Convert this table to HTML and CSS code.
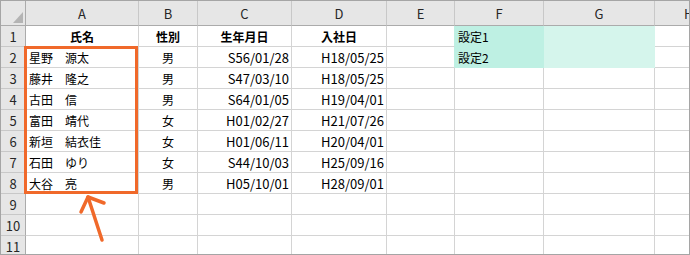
FILE: index.html
```html
<!DOCTYPE html>
<html lang="ja">
<head>
<meta charset="utf-8">
<link rel="stylesheet" href="styles.css">
</head>
<body>
<div class="sheet">
  <div class="grid">
    <div class="corner"><svg class="tri" width="24" height="24" viewBox="0 0 24 24"><polygon points="12,22 22,22 22,11" fill="#b4b4b4"/></svg></div>
    <div class="hc">A</div><div class="hc">B</div><div class="hc">C</div><div class="hc">D</div><div class="hc">E</div><div class="hc">F</div><div class="hc">G</div><div class="hc last">H</div>

    <div class="rh">1</div>
    <div class="c ctr cj b">氏名</div><div class="c ctr cj b">性別</div><div class="c ctr cj b">生年月日</div><div class="c ctr cj b">入社日</div><div class="c e-adj"></div><div class="c l cj f1">設定1</div><div class="c f2"></div><div class="c last"></div>

    <div class="rh">2</div>
    <div class="c l cj">星野　源太</div><div class="c ctr cj">男</div><div class="c r">S56/01/28</div><div class="c r">H18/05/25</div><div class="c e-adj"></div><div class="c l cj f1">設定2</div><div class="c f2"></div><div class="c last"></div>

    <div class="rh">3</div>
    <div class="c l cj">藤井　隆之</div><div class="c ctr cj">男</div><div class="c r">S47/03/10</div><div class="c r">H18/05/25</div><div class="c"></div><div class="c"></div><div class="c"></div><div class="c last"></div>

    <div class="rh">4</div>
    <div class="c l cj">古田　信</div><div class="c ctr cj">男</div><div class="c r">S64/01/05</div><div class="c r">H19/04/01</div><div class="c"></div><div class="c"></div><div class="c"></div><div class="c last"></div>

    <div class="rh">5</div>
    <div class="c l cj">富田　靖代</div><div class="c ctr cj">女</div><div class="c r">H01/02/27</div><div class="c r">H21/07/26</div><div class="c"></div><div class="c"></div><div class="c"></div><div class="c last"></div>

    <div class="rh">6</div>
    <div class="c l cj">新垣　結衣佳</div><div class="c ctr cj">女</div><div class="c r">H01/06/11</div><div class="c r">H20/04/01</div><div class="c"></div><div class="c"></div><div class="c"></div><div class="c last"></div>

    <div class="rh">7</div>
    <div class="c l cj">石田　ゆり</div><div class="c ctr cj">女</div><div class="c r">S44/10/03</div><div class="c r">H25/09/16</div><div class="c"></div><div class="c"></div><div class="c"></div><div class="c last"></div>

    <div class="rh">8</div>
    <div class="c l cj">大谷　亮</div><div class="c ctr cj">男</div><div class="c r">H05/10/01</div><div class="c r">H28/09/01</div><div class="c"></div><div class="c"></div><div class="c"></div><div class="c last"></div>

    <div class="rh">9</div>
    <div class="c"></div><div class="c"></div><div class="c"></div><div class="c"></div><div class="c"></div><div class="c"></div><div class="c"></div><div class="c last"></div>

    <div class="rh">10</div>
    <div class="c"></div><div class="c"></div><div class="c"></div><div class="c"></div><div class="c"></div><div class="c"></div><div class="c"></div><div class="c last"></div>

    <div class="rh">11</div>
    <div class="c"></div><div class="c"></div><div class="c"></div><div class="c"></div><div class="c"></div><div class="c"></div><div class="c"></div><div class="c last"></div>
  </div>
  <svg class="overlay" width="690" height="255" viewBox="0 0 690 255">
    <rect x="25.5" y="47.5" width="111" height="145" fill="none" stroke="#f0692a" stroke-width="3"/>
    <line x1="102" y1="240" x2="88" y2="197" stroke="#f0692a" stroke-width="3.5" stroke-linecap="round"/>
    <polyline points="81,212 88,197 104,203" fill="none" stroke="#f0692a" stroke-width="3.5" stroke-linecap="round" stroke-linejoin="round"/>
  </svg>
</div>
</body>
</html>
```

FILE: styles.css
```css
html, body {
  margin: 0;
  padding: 0;
  background: #ffffff;
}

body {
  font-family: "Noto Sans CJK JP", "Noto Sans", sans-serif;
  color: #000;
}

.sheet {
  position: relative;
  width: 690px;
  height: 255px;
  box-sizing: border-box;
  border: 1px solid #a5a5a5;
  overflow: hidden;
}

.grid {
  display: grid;
  grid-template-columns: 25px 113px 59px 94px 95px 68px 89px 111px 68px;
  grid-template-rows: 25px;
  grid-auto-rows: 21px;
}

.grid > div {
  box-sizing: border-box;
  display: flex;
  align-items: center;
  white-space: nowrap;
  overflow: hidden;
}

.corner {
  background: #e6e6e6;
  border-right: 1px solid #ababab;
  border-bottom: 1px solid #ababab;
}

.tri {
  display: block;
}

.hc {
  background: #e6e6e6;
  border-right: 1px solid #c8c8c8;
  border-bottom: 1px solid #ababab;
  justify-content: center;
  font-size: 13px;
  color: #262626;
  padding-top: 1px;
}

.rh {
  background: #e6e6e6;
  border-right: 1px solid #ababab;
  border-bottom: 1px solid #c8c8c8;
  justify-content: center;
  font-size: 13px;
  color: #262626;
}

.c {
  border-right: 1px solid #d4d4d4;
  border-bottom: 1px solid #d4d4d4;
  font-size: 13px;
}

.last {
  border-right: none;
}

.hc.last {
  justify-content: flex-start;
  padding-left: 29px;
}

.cj {
  font-size: 12px;
}

.b {
  font-weight: bold;
}

.l {
  justify-content: flex-start;
  padding-left: 3px;
}

.ctr {
  justify-content: center;
}

.r {
  justify-content: flex-end;
  padding-right: 2px;
}

.f1 {
  background: #bef0e3;
  border-right-color: #bef0e3;
  border-bottom-color: #bef0e3;
}

.f2 {
  background: #d5f5ec;
  border-right-color: #d5f5ec;
  border-bottom-color: #d5f5ec;
}

.e-adj {
  border-right-color: #bef0e3;
}

.overlay {
  position: absolute;
  left: -1px;
  top: -1px;
  pointer-events: none;
}
```
